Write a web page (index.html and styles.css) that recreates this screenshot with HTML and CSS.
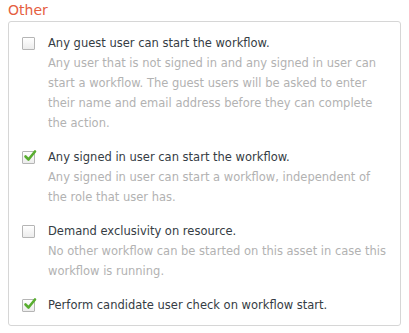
FILE: index.html
```html
<!DOCTYPE html>
<html lang="en">
<head>
  <meta charset="UTF-8">
  <title>Other options</title>
  <link rel="stylesheet" href="styles.css">
</head>
<body>
  <fieldset class="group">
    <legend>Other</legend>

    <div class="option">
      <span class="box"></span>
      <div class="text">
        <div class="label">Any guest user can start the workflow.</div>
        <div class="desc">Any user that is not signed in and any signed in user can start a workflow. The guest users will be asked to enter their name and email address before they can complete the action.</div>
      </div>
    </div>

    <div class="option">
      <span class="box checked">
        <svg viewBox="0 0 14 14" width="14" height="14"><path d="M2.5 7.5 L5.5 10.5 L12 2.5" fill="none" stroke="#58ad2f" stroke-width="2.6" stroke-linecap="round" stroke-linejoin="round"/></svg>
      </span>
      <div class="text">
        <div class="label">Any signed in user can start the workflow.</div>
        <div class="desc">Any signed in user can start a workflow, independent of the role that user has.</div>
      </div>
    </div>

    <div class="option">
      <span class="box"></span>
      <div class="text">
        <div class="label">Demand exclusivity on resource.</div>
        <div class="desc">No other workflow can be started on this asset in case this workflow is running.</div>
      </div>
    </div>

    <div class="option">
      <span class="box checked">
        <svg viewBox="0 0 14 14" width="14" height="14"><path d="M2.5 7.5 L5.5 10.5 L12 2.5" fill="none" stroke="#58ad2f" stroke-width="2.6" stroke-linecap="round" stroke-linejoin="round"/></svg>
      </span>
      <div class="text">
        <div class="label">Perform candidate user check on workflow start.</div>
      </div>
    </div>
  </fieldset>
</body>
</html>
```

FILE: styles.css
```css
body { margin: 0; padding: 0 8px; background: #fff; font-family: "DejaVu Sans", sans-serif; font-size: 11.5px; color: #353c44; }
.group { margin: 0; padding: 11px 12px 10px 13px; border: 1px solid #d6d6d6; border-radius: 3px; position: relative; margin-top: 21px; }
.group legend { position: absolute; top: -22px; left: -1px; padding: 0; font-size: 14px; color: #e5603f; line-height: 20px; }
.option { display: flex; gap: 13px; margin-bottom: 14px; }
.option:last-child { margin-bottom: 0; }
.box { flex: none; width: 11px; height: 11px; margin-top: 4px; border: 1px solid #b5b5b5; border-radius: 1px; background: linear-gradient(#ffffff, #ececec); position: relative; }
.box svg { position: absolute; left: 0; top: -3px; }
.label { line-height: 20px; }
.desc { line-height: 20px; color: #b2b2b2; }
```
